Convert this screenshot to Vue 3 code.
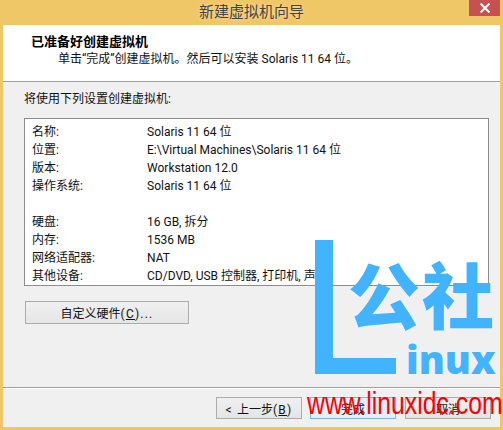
<script setup>
const rows = [
  ['名称:', 'Solaris 11 64 位'],
  ['位置:', 'E:\\Virtual Machines\\Solaris 11 64 位'],
  ['版本:', 'Workstation 12.0'],
  ['操作系统:', 'Solaris 11 64 位'],
  ['', ''],
  ['硬盘:', '16 GB, 拆分'],
  ['内存:', '1536 MB'],
  ['网络适配器:', 'NAT'],
  ['其他设备:', 'CD/DVD, USB 控制器, 打印机, 声卡'],
]
</script>

<template>
  <div class="window">
    <div class="titlebar">
      <span class="title">新建虚拟机向导</span>
      <span class="close">
        <svg width="12" height="10" viewBox="0 0 12 10"><path d="M1.5 .5 L10.5 9.5 M10.5 .5 L1.5 9.5" stroke="#fff" stroke-width="2" fill="none"/></svg>
      </span>
    </div>
    <div class="client">
      <header class="head">
        <h1>已准备好创建虚拟机</h1>
        <p>单击“完成”创建虚拟机。然后可以安装 Solaris 11 64 位。</p>
      </header>
      <main class="body">
        <p class="lead">将使用下列设置创建虚拟机:</p>
        <div class="box">
          <div v-for="(r, i) in rows" :key="i" class="row">
            <span class="key">{{ r[0] }}</span>
            <span class="val">{{ r[1] }}</span>
          </div>
        </div>
        <button class="btn custom">自定义硬件<span class="wide">(<u>C</u>)...</span></button>
      </main>
      <footer class="foot">
        <button class="btn nav"><span class="wide">&lt; </span>上一步<span class="wide">(<u>B</u>)</span></button>
        <button class="btn nav primary">完成</button>
        <button class="btn nav">取消</button>
      </footer>
    </div>
    <div class="mark">
      <div class="mark-l"></div>
      <span class="mark-cn gong">公</span>
      <span class="mark-cn she">社</span>
      <span class="mark-inux">inux</span>
      <span class="mark-url">www.linuxidc.com</span>
    </div>
  </div>
</template>

<style>
html, body { margin: 0; background: #f0c766; }
</style>

<style scoped>
.window {
  position: relative;
  width: 503px;
  height: 430px;
  overflow: hidden;
  background: #f0c766;
  box-sizing: border-box;
  padding: 0 3px 3px;
  display: flex;
  flex-direction: column;
  font-family: Roboto, "Noto Sans CJK SC", sans-serif;
  font-size: 12px;
  color: #111;
}
.titlebar {
  height: 25px;
  flex: none;
  box-sizing: border-box;
  padding-bottom: 4px;
  display: flex;
  align-items: center;
  justify-content: center;
  position: relative;
}
.title {
  font-family: "Noto Sans CJK SC", sans-serif;
  font-size: 15px;
  line-height: 20px;
  color: #444;
  text-shadow: 0 0 4px rgba(255, 240, 200, .7);
}
.close {
  position: absolute;
  right: 0;
  top: 0;
  width: 31px;
  height: 16px;
  background: #c75050;
  display: flex;
  align-items: center;
  justify-content: center;
}
.client {
  flex: 1;
  display: flex;
  flex-direction: column;
  background: #f0f0f0;
  min-height: 0;
}
.head {
  height: 57px;
  flex: none;
  background: #fff;
  border-bottom: 1px solid #a0a0a0;
  box-sizing: border-box;
  padding: 7px 0 0 28px;
}
.head h1 {
  margin: 0;
  font-family: "Noto Sans CJK SC", sans-serif;
  font-size: 13px;
  line-height: 18px;
  font-weight: 700;
  color: #000;
}
.head p {
  margin: 1px 0 0;
  padding-left: 27px;
  font-size: 12px;
  line-height: 17px;
}
.body {
  flex: 1;
  padding: 0 11px 0 21px;
  min-height: 0;
  display: flex;
  flex-direction: column;
  border-bottom: 1px solid #a0a0a0;
  box-shadow: 0 1px 0 #fff;
}
.lead {
  margin: 9px 0 0;
  line-height: 17px;
}
.box {
  margin-top: 10px;
  height: 168px;
  box-sizing: border-box;
  background: #fff;
  border: 1px solid #8c8c8c;
  padding: 4px 0 0 7px;
}
.row {
  display: grid;
  grid-template-columns: 115px 1fr;
  height: 18px;
  line-height: 18px;
  white-space: nowrap;
}
.btn {
  font: inherit;
  color: #111;
  background: linear-gradient(#f0f0f0, #e5e5e5);
  border: 1px solid #acacac;
  box-sizing: border-box;
  padding: 0;
  text-align: center;
}
.wide { letter-spacing: 1.2px; }
.custom {
  margin: 15px 0 0 1px;
  width: 164px;
  height: 23px;
  flex: none;
}
.foot {
  height: 39px;
  flex: none;
  box-sizing: border-box;
  padding: 9px 0 0 213px;
  display: flex;
  gap: 9px;
}
.nav {
  width: 86px;
  height: 22px;
}
.primary {
  background: #e3f0fc;
  border-color: #7eb4ea;
  margin-left: -1px;
}
.mark {
  position: absolute;
  inset: 0;
  pointer-events: none;
}
.mark-l {
  position: absolute;
  left: 315px;
  top: 240px;
  width: 63px;
  height: 118px;
  border-left: 18px solid #42b4ff;
  border-bottom: 16px solid #42b4ff;
}
.mark-cn {
  position: absolute;
  font-family: "Noto Sans CJK SC", sans-serif;
  font-weight: 900;
  color: #42b4ff;
  line-height: 1;
}
.gong { left: 348px; top: 256px; font-size: 72px; }
.she { left: 422px; top: 256px; font-size: 72px; }
.mark-inux {
  position: absolute;
  left: 406px;
  top: 334px;
  font-family: "Open Sans", sans-serif;
  font-weight: 800;
  font-size: 39px;
  line-height: 50px;
  color: #42b4ff;
}
.mark-url {
  position: absolute;
  left: 307px;
  top: 386px;
  font-family: "Liberation Sans", sans-serif;
  font-size: 31px;
  line-height: 36px;
  color: #ff0000;
  white-space: nowrap;
  transform: scaleX(.8);
  transform-origin: left top;
}
</style>
